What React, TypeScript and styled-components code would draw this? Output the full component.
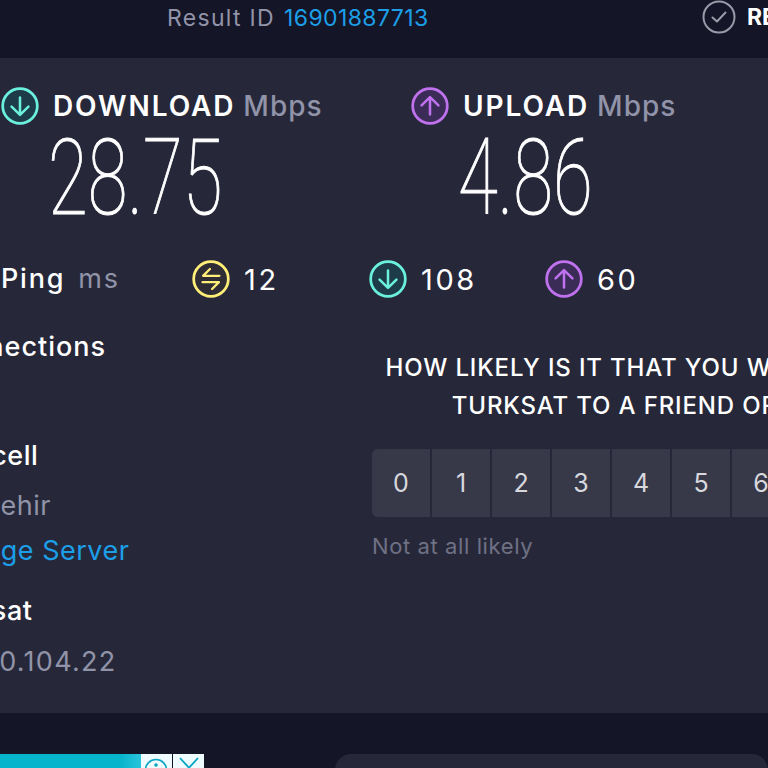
import React from "react";
import styled, { createGlobalStyle } from "styled-components";

const GlobalStyle = createGlobalStyle`
    html, body {
        margin: 0;
        padding: 0;
        background: #141526;
    }
`;

const colors = {
    teal: "#6af0dc",
    purple: "#bf71ee",
    yellow: "#ffee77",
    white: "#ffffff",
    muted: "#9193a8",
    blue: "#1c9fe8"
};

const Page = styled.div`
    width: 768px;
    height: 768px;
    overflow: hidden;
    background: #141526;
    font-family: Inter, "Open Sans", sans-serif;
    color: #fff;
`;

const Header = styled.div`
    height: 58px;
    display: flex;
    align-items: flex-start;
    box-sizing: border-box;
    padding: 3px 0 0 167px;
    white-space: nowrap;
`;

const ResultId = styled.div`
    flex: none;
    width: 535px;
    font-size: 23px;
    line-height: 30px;
    letter-spacing: 1.3px;
    color: ${colors.muted};
`;

const ResultNumber = styled.span`
    color: ${colors.blue};
    margin-left: 9px;
    letter-spacing: 0.4px;
`;

const Results = styled.div`
    flex: none;
    display: flex;
    align-items: center;
    gap: 11px;
    margin-top: -3px;
    font-size: 23px;
    font-weight: 700;
    line-height: 30px;
`;

const Panel = styled.section`
    height: 655px;
    background: #26283a;
    box-sizing: border-box;
    padding: 29px 0 0 1px;
    overflow: hidden;
`;

const Speeds = styled.div`
    display: grid;
    grid-template-columns: 410px 357px;
`;

const SpeedHead = styled.div`
    display: flex;
    align-items: center;
    gap: 14px;
    font-size: 28px;
    line-height: 38px;
    font-weight: 600;
    letter-spacing: 1.9px;
    white-space: nowrap;
`;

const Unit = styled.span`
    color: ${colors.muted};
    font-weight: 500;
    margin-left: 8px;
    letter-spacing: 1px;
`;

const BigNumber = styled.div`
    margin: 9px 0 0 47px;
    height: 88px;
    font-family: Roboto, sans-serif;
    font-weight: 100;
    font-size: 106px;
    line-height: 88px;
    transform: scaleX(0.685);
    transform-origin: left center;
    -webkit-text-stroke: 1px #fff;
`;

const PingRow = styled.div`
    margin-top: 38px;
    display: grid;
    grid-template-columns: 191px 177px 176px 1fr;
    align-items: center;
    height: 38px;
    padding-left: 0;
`;

const PingLabel = styled.div`
    font-size: 27px;
    line-height: 38px;
    letter-spacing: 1.8px;
    font-weight: 500;
`;

const PingUnit = styled.span`
    color: ${colors.muted};
    font-weight: 400;
    margin-left: 13px;
`;

const Latency = styled.div`
    display: flex;
    align-items: center;
    gap: 14px;
    font-size: 29px;
    letter-spacing: 2.6px;
    font-weight: 400;
`;

const Lower = styled.div`
    margin-top: 31px;
    display: grid;
    grid-template-columns: 371px 658px;
    align-items: start;
`;

const Connections = styled.div`
    margin-left: -69px;
    white-space: nowrap;
`;

const InfoLine = styled.div<{ $gap: number; $tone?: string; $weight?: number; $spacing?: number }>`
    margin-top: ${(p) => p.$gap}px;
    font-size: 27px;
    line-height: 36px;
    font-weight: ${(p) => p.$weight ?? 400};
    letter-spacing: ${(p) => p.$spacing ?? 0.5}px;
    color: ${(p) => p.$tone ?? "#fff"};
`;

const Rating = styled.div`
    padding-top: 20px;
`;

const Question = styled.div`
    text-align: center;
    font-size: 24px;
    line-height: 38px;
    font-weight: 500;
    letter-spacing: 0.85px;
    white-space: nowrap;
`;

const Scale = styled.div`
    margin-top: 24px;
    display: grid;
    grid-template-columns: repeat(11, 1fr);
    gap: 2px;
    height: 68px;
    border-radius: 6px;
    overflow: hidden;
`;

const ScaleCell = styled.div`
    display: flex;
    align-items: center;
    justify-content: center;
    background: #373949;
    color: #d7d8de;
    font-size: 25px;
    font-weight: 400;
`;

const ScaleHint = styled.div`
    margin-top: 14px;
    font-size: 22px;
    line-height: 30px;
    letter-spacing: 0.6px;
    color: #6f7184;
`;

const Bottom = styled.div`
    margin-top: 41px;
    display: flex;
    height: 14px;
`;

const AdBanner = styled.div`
    width: 141px;
    background: linear-gradient(90deg, #06b4cb 0%, #06b4cb 85%, #2bc4dc 100%);
`;

const AdButton = styled.div`
    width: 31px;
    background: #eefbff;
    margin-right: 1px;
    overflow: hidden;
`;

const SideCard = styled.div`
    margin-left: 130px;
    flex: 1;
    height: 40px;
    background: #26283a;
    border-radius: 16px;
`;

const Arrow = ({ up }: { up?: boolean }) =>
    up ? (
        <path d="M18 26V10M10 17.5L18 9.5L26 17.5" fill="none" strokeWidth="2.4" strokeLinecap="round" strokeLinejoin="round" />
    ) : (
        <path d="M18 10V26M10 18.5L18 26.5L26 18.5" fill="none" strokeWidth="2.4" strokeLinecap="round" strokeLinejoin="round" />
    );

const Badge = ({ tone, fill, children }: { tone: string; fill: string; children: React.ReactNode }) => (
    <svg width="38" height="38" viewBox="0 0 36 36" stroke={tone} style={{ flex: "none" }}>
        <circle cx="18" cy="18" r="16.4" fill={fill} strokeWidth="2.6" />
        {children}
    </svg>
);

const DownIcon = () => (
    <Badge tone={colors.teal} fill="#1d3b48">
        <Arrow />
    </Badge>
);

const UpIcon = () => (
    <Badge tone={colors.purple} fill="#3a2c56">
        <Arrow up />
    </Badge>
);

const PingIcon = () => (
    <Badge tone={colors.yellow} fill="#2e2d35">
        <path
            d="M26 15H10.5L17 8.5M10 21H25.5L19 27.5"
            fill="none"
            strokeWidth="2.2"
            strokeLinecap="round"
            strokeLinejoin="round"
        />
    </Badge>
);

const CheckIcon = () => (
    <svg width="34" height="34" viewBox="0 0 34 34" fill="none" stroke="#9a9ba8">
        <circle cx="17" cy="17" r="15.5" strokeWidth="2" />
        <path d="M10.5 17.5L15 21.5L23.5 12.5" strokeWidth="2" strokeLinecap="round" strokeLinejoin="round" />
    </svg>
);

const scores = [0, 1, 2, 3, 4, 5, 6, 7, 8, 9, 10];

const App = () => {
    return (
        <Page>
            <GlobalStyle />
            <Header>
                <ResultId>
                    Result ID<ResultNumber>16901887713</ResultNumber>
                </ResultId>
                <Results>
                    <CheckIcon />
                    RESULTS
                </Results>
            </Header>
            <Panel>
                <Speeds>
                    <div>
                        <SpeedHead>
                            <DownIcon />
                            <span>
                                DOWNLOAD<Unit>Mbps</Unit>
                            </span>
                        </SpeedHead>
                        <BigNumber>28.75</BigNumber>
                    </div>
                    <div>
                        <SpeedHead>
                            <UpIcon />
                            <span>
                                UPLOAD<Unit>Mbps</Unit>
                            </span>
                        </SpeedHead>
                        <BigNumber>4.86</BigNumber>
                    </div>
                </Speeds>
                <PingRow>
                    <PingLabel>
                        Ping<PingUnit>ms</PingUnit>
                    </PingLabel>
                    <Latency>
                        <PingIcon />
                        12
                    </Latency>
                    <Latency>
                        <DownIcon />
                        108
                    </Latency>
                    <Latency>
                        <UpIcon />
                        60
                    </Latency>
                </PingRow>
                <Lower>
                    <Connections>
                        <InfoLine $gap={0} $weight={500} $spacing={1}>Connections</InfoLine>
                        <InfoLine $gap={73} $weight={500}>Turkcell</InfoLine>
                        <InfoLine $gap={14} $tone={colors.muted}>Eskisehir</InfoLine>
                        <InfoLine $gap={9} $tone={colors.blue}>Change Server</InfoLine>
                        <InfoLine $gap={24} $weight={500}>Turksat</InfoLine>
                        <InfoLine $gap={15} $tone={colors.muted} $spacing={1.3}>16.140.104.22</InfoLine>
                    </Connections>
                    <Rating>
                        <Question>
                            HOW LIKELY IS IT THAT YOU WOULD RECOMMEND
                            <br />
                            TURKSAT TO A FRIEND OR COLLEAGUE?
                        </Question>
                        <Scale>
                            {scores.map((score) => (
                                <ScaleCell key={score}>{score}</ScaleCell>
                            ))}
                        </Scale>
                        <ScaleHint>Not at all likely</ScaleHint>
                    </Rating>
                </Lower>
            </Panel>
            <Bottom>
                <AdBanner />
                <AdButton>
                    <svg width="31" height="14" viewBox="0 0 31 14" fill="none" stroke="#06a5c0" strokeWidth="1.6">
                        <circle cx="15" cy="14" r="10.5" />
                        <circle cx="15" cy="9" r="1" fill="#06a5c0" />
                    </svg>
                </AdButton>
                <AdButton>
                    <svg width="32" height="14" viewBox="0 0 32 14" fill="none" stroke="#06a5c0" strokeWidth="1.8">
                        <path d="M7 2L18 14M25 2L14 14" />
                    </svg>
                </AdButton>
                <SideCard />
            </Bottom>
        </Page>
    );
};

export default App;
